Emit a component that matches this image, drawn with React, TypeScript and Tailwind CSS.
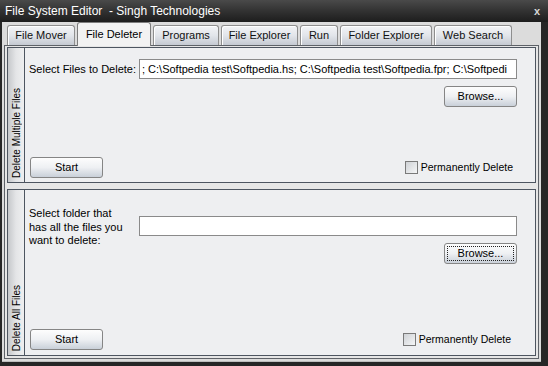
import React from "react";

const font = { fontFamily: '"Liberation Sans", Arial, sans-serif' };

function Tab({ label, w, selected }: { label: string; w: string; selected?: boolean }) {
  if (selected) {
    return (
      <div
        className={`${w} h-[24px] -mb-px relative z-10 flex items-center justify-center rounded-t-[3px] border border-b-0 border-[#7d7d7d] bg-[#f2f2f2] text-[11px] text-black`}
      >
        {label}
      </div>
    );
  }
  return (
    <div
      className={`${w} h-[20px] flex items-center justify-center rounded-t-[3px] border border-b-0 border-[#8e8e8e] bg-gradient-to-b from-[#f3f4f6] via-[#e2e5ea] to-[#c5cad2] text-[11px] text-[#111] shadow-[inset_1px_1px_0_#ffffff]`}
    >
      {label}
    </div>
  );
}

function Button({ label, focused }: { label: string; focused?: boolean }) {
  return (
    <div className="w-[73px] h-[21px] rounded-[3px] border border-[#858585] bg-gradient-to-b from-[#fdfdfd] via-[#eef0f3] to-[#c9d0d9] flex items-center justify-center p-[2px] text-[11px] text-black">
      <div
        className={`w-full h-full flex items-center justify-center ${
          focused ? "border border-dotted border-[#222]" : ""
        }`}
      >
        {label}
      </div>
    </div>
  );
}

function Checkbox() {
  return (
    <div className="flex items-center gap-[3px]">
      <div className="w-[13px] h-[13px] border border-[#7a7a7a] bg-gradient-to-br from-[#cfd2d6] to-[#f5f6f7]" />
      <span className="text-[10.5px] text-black">Permanently Delete</span>
    </div>
  );
}

function Strip({ label }: { label: string }) {
  return (
    <div className="w-[17px] shrink-0 border-r border-[#4d5560] bg-gradient-to-r from-[#c6c8cb] via-[#e4e5e7] to-[#eeeff0] flex flex-col justify-end items-center pb-[4px]">
      <span className="[writing-mode:vertical-rl] rotate-180 text-[10px] text-black whitespace-nowrap leading-[15px]">
        {label}
      </span>
    </div>
  );
}

export default function App() {
  const files =
    "; C:\\Softpedia test\\Softpedia.hs; C:\\Softpedia test\\Softpedia.fpr; C:\\Softpedi";
  return (
    <div className="w-[548px] h-[366px] bg-[#262626] flex flex-col overflow-hidden" style={font}>
      {/* Title bar */}
      <div className="h-[22px] shrink-0 bg-gradient-to-b from-[#4a4a4a] via-[#323232] to-[#1d1d1d] flex items-center justify-between pl-[5px] pr-[8px]">
        <span className="text-[12px] text-white whitespace-pre">File System Editor  - Singh Technologies</span>
        <span className="text-[11px] font-bold text-[#d8d8d8]">x</span>
      </div>

      {/* Client */}
      <div className="flex-1 ml-[2px] mr-[7px] mb-[4px] bg-[#dcdcdc] flex flex-col px-[2px] pb-[2px] border-b border-[#bdbdbd]">
        {/* Tabs */}
        <div className="h-[23px] shrink-0 flex items-end pl-[3px] gap-[2px]">
          <Tab label="File Mover" w="w-[68px]" />
          <Tab label="File Deleter" w="w-[74px]" selected />
          <Tab label="Programs" w="w-[66px]" />
          <Tab label="File Explorer" w="w-[77px]" />
          <Tab label="Run" w="w-[38px]" />
          <Tab label="Folder Explorer" w="w-[92px]" />
          <Tab label="Web Search" w="w-[78px]" />
        </div>

        {/* Panel */}
        <div className="flex-1 border border-[#5e6268] bg-[#e6e6e6] flex flex-col gap-[6px] pt-[1px] pl-[2px] pr-[2px] pb-[2px]">
          {/* Group 1 */}
          <div className="h-[136px] shrink-0 flex border border-[#4d5560] bg-[#eeeff1]">
            <Strip label="Delete Multiple Files" />
            <div className="flex-1 min-w-0 flex flex-col pt-[11px] pr-[18px] pl-[4px] pb-[4px]">
              <div className="flex items-start">
                <span className="w-[110px] shrink-0 text-[11px] leading-[20px] text-black">Select Files to Delete:</span>
                <div className="flex-1 min-w-0 flex flex-col">
                  <div className="h-[20px] border border-[#8a8a8a] bg-white overflow-hidden flex items-center pl-[2px]">
                    <span className="text-[11px] text-black whitespace-nowrap">{files}</span>
                  </div>
                  <div className="flex justify-end mt-[7px]">
                    <Button label="Browse..." />
                  </div>
                </div>
              </div>
              <div className="flex-1" />
              <div className="flex items-center justify-between pl-[1px] pr-[4px]">
                <Button label="Start" />
                <Checkbox />
              </div>
            </div>
          </div>

          {/* Group 2 */}
          <div className="flex-1 flex border border-[#4d5560] bg-[#eeeff1]">
            <Strip label="Delete All Files" />
            <div className="flex-1 min-w-0 flex flex-col pt-[17px] pr-[18px] pl-[4px] pb-[5px]">
              <div className="flex items-start">
                <span className="w-[110px] shrink-0 text-[11px] leading-[13.5px] text-black">
                  Select folder that
                  <br />
                  has all the files you
                  <br />
                  want to delete:
                </span>
                <div className="flex-1 min-w-0 flex flex-col mt-[9px]">
                  <div className="h-[20px] border border-[#8a8a8a] bg-white" />
                  <div className="flex justify-end mt-[7px]">
                    <Button label="Browse..." focused />
                  </div>
                </div>
              </div>
              <div className="flex-1" />
              <div className="flex items-center justify-between pl-[1px] pr-[6px]">
                <Button label="Start" />
                <Checkbox />
              </div>
            </div>
          </div>
        </div>
      </div>
    </div>
  );
}
